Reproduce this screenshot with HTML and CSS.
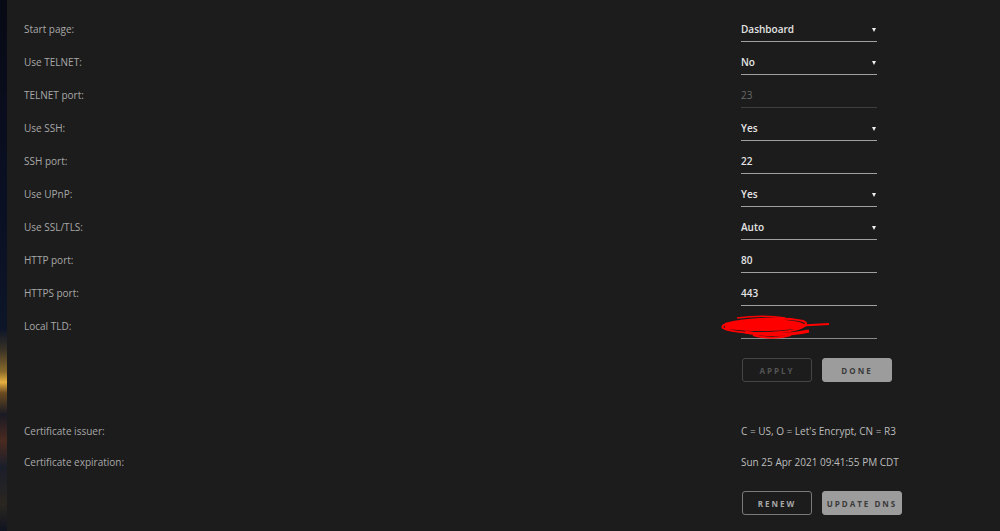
FILE: index.html
```html
<!DOCTYPE html>
<html lang="en">
<head>
    <meta charset="UTF-8">
    <meta name="viewport" content="width=device-width, initial-scale=1.0">
    <title>Controller Settings</title>
    <link rel="stylesheet" href="styles.css">
</head>
<body>
    <div class="backdrop"></div>
    <main class="panel">
        <div class="row">
            <span class="label">Start page:</span>
            <div class="field select">Dashboard<span class="caret"></span></div>
        </div>
        <div class="row">
            <span class="label">Use TELNET:</span>
            <div class="field select">No<span class="caret"></span></div>
        </div>
        <div class="row">
            <span class="label">TELNET port:</span>
            <div class="field disabled">23</div>
        </div>
        <div class="row">
            <span class="label">Use SSH:</span>
            <div class="field select">Yes<span class="caret"></span></div>
        </div>
        <div class="row">
            <span class="label">SSH port:</span>
            <div class="field">22</div>
        </div>
        <div class="row">
            <span class="label">Use UPnP:</span>
            <div class="field select">Yes<span class="caret"></span></div>
        </div>
        <div class="row">
            <span class="label">Use SSL/TLS:</span>
            <div class="field select">Auto<span class="caret"></span></div>
        </div>
        <div class="row">
            <span class="label">HTTP port:</span>
            <div class="field">80</div>
        </div>
        <div class="row">
            <span class="label">HTTPS port:</span>
            <div class="field">443</div>
        </div>
        <div class="row">
            <span class="label">Local TLD:</span>
            <div class="field redacted">
                <!-- scribbled out by hand in the original -->
                <svg class="scribble" width="112" height="26" viewBox="0 0 112 26">
                    <path d="M6 9 C28 3 66 2 84 6 C92 9 84 15 62 17 C42 19 12 18 4 13 C0 9 18 5 40 5 C62 5 82 7 86 11" fill="none" stroke="#ff0000" stroke-width="2"/>
                    <path d="M8 8 C30 4 62 4 82 8 L84 12 C66 17 30 17 8 14 Z" fill="#ff0000"/>
                    <path d="M6 12 C30 9 62 9 80 12" fill="none" stroke="#ff0000" stroke-width="6"/>
                    <path d="M74 11 L110 9" fill="none" stroke="#ff0000" stroke-width="2"/>
                    <path d="M26 17 C44 21 72 20 90 16" fill="none" stroke="#ff0000" stroke-width="3"/>
                    <path d="M34 20 C48 24 62 23 72 20" fill="none" stroke="#ff0000" stroke-width="2"/>
                    <path d="M18 3 C34 1 54 1 66 3" fill="none" stroke="#ff0000" stroke-width="1.5"/>
                </svg>
            </div>
        </div>
        <div class="actions">
            <button class="btn outline muted">Apply</button>
            <button class="btn filled">Done</button>
        </div>

        <div class="info">
            <div class="row short">
                <span class="label">Certificate issuer:</span>
                <span class="value">C = US, O = Let's Encrypt, CN = R3</span>
            </div>
            <div class="row short">
                <span class="label">Certificate expiration:</span>
                <span class="value">Sun 25 Apr 2021 09:41:55 PM CDT</span>
            </div>
        </div>
        <div class="actions tight">
            <button class="btn outline">Renew</button>
            <button class="btn filled wide">Update DNS</button>
        </div>
    </main>
</body>
</html>
```

FILE: styles.css
```css
body {
    margin: 0;
    height: 531px;
    display: flex;
    overflow: hidden;
    font-family: "Open Sans", "Noto Sans", sans-serif;
    font-size: 10px;
    background: #1c1c1c;
}
.backdrop {
    width: 7px;
    flex-shrink: 0;
    background: linear-gradient(180deg, #070914 0%, #0a1024 40%, #0d1528 62%, #3a3326 66%, #8a6a2a 70%, #e8b040 72%, #6a4a20 74%, #1a1a24 78%, #4a2a20 83%, #1a1e2a 88%, #2a2620 95%, #101420 100%);
}
.panel {
    flex: 1;
    background: #1c1c1c;
    padding: 12px 0 0 17px;
}
.row {
    display: grid;
    grid-template-columns: 717px 136px;
    height: 33px;
    align-items: center;
}
.row.short {
    height: 31px;
}
.label {
    color: #a8a8a8;
}
.field {
    position: relative;
    height: 24px;
    line-height: 25px;
    margin-top: 2px;
    border-bottom: 1px solid #a0a0a0;
    color: #e4e4e4;
    font-weight: 600;
}
.field.disabled {
    color: #6a6a6a;
    font-weight: 400;
    border-bottom-color: #3e3e3e;
}
.field.redacted {
    border-bottom-color: #8a8a8a;
}
.caret {
    position: absolute;
    right: 1px;
    top: 11px;
    border-left: 2.5px solid transparent;
    border-right: 2.5px solid transparent;
    border-top: 4px solid #f0f0f0;
}
.scribble {
    position: absolute;
    left: -22px;
    top: 1px;
}
.actions {
    display: flex;
    gap: 10px;
    padding-left: 718px;
    margin-top: 16px;
}
.actions.tight {
    margin-top: 14px;
}
.btn {
    width: 70px;
    height: 24px;
    border-radius: 3px;
    font-family: inherit;
    font-size: 8px;
    font-weight: 700;
    letter-spacing: 2px;
    text-transform: uppercase;
    padding: 0;
    cursor: pointer;
}
.btn.outline {
    background: transparent;
    border: 1px solid #7a7a7a;
    color: #a8a8a8;
}
.btn.outline.muted {
    border-color: #454545;
    color: #555555;
}
.btn.filled {
    background: #9c9c9c;
    border: 1px solid #9c9c9c;
    color: #3a3a3a;
}
.btn.wide {
    width: 80px;
}
.info {
    margin-top: 33px;
}
.value {
    color: #bdbdbd;
    white-space: nowrap;
}
```
